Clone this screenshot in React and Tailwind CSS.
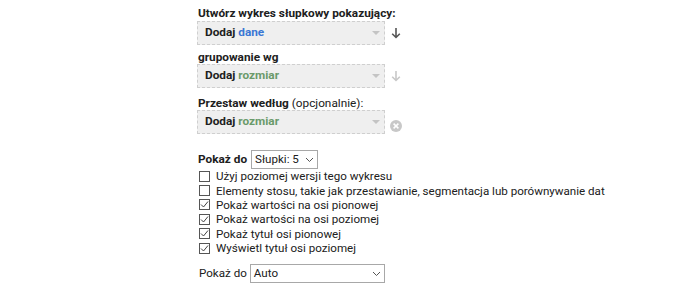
import React from "react";

const font = { fontFamily: "Roboto, 'Noto Sans', sans-serif" };

function Caret() {
  return (
    <svg width="8" height="5" viewBox="0 0 8 5" className="shrink-0">
      <path d="M0 0 L8 0 L4 4 Z" fill="#c4c4c4" />
    </svg>
  );
}

function DownArrow({ color }) {
  return (
    <svg width="10" height="12" viewBox="0 0 10 12">
      <path d="M5 1 V10.5 M1.2 6.8 L5 10.5 L8.8 6.8" stroke={color} strokeWidth="1.6" fill="none" />
    </svg>
  );
}

function ClearIcon() {
  return (
    <svg width="12" height="12" viewBox="0 0 12 12">
      <circle cx="6" cy="6" r="6" fill="#c8c8c8" />
      <path d="M3.6 3.6 L8.4 8.4 M8.4 3.6 L3.6 8.4" stroke="#fff" strokeWidth="1.5" />
    </svg>
  );
}

function DashedSelect({ word, wordColor, right }) {
  return (
    <div className="flex items-center">
      <div className="w-[188px] h-[24px] border border-dashed border-[#cfcfcf] bg-[#efefef] flex items-center justify-between pl-[7px] pr-[4px]">
        <span className="text-[11.8px] font-bold text-[#202020]">
          Dodaj <span style={{ color: wordColor }}>{word}</span>
        </span>
        <Caret />
      </div>
      <div className="w-[20px] flex justify-center ml-[1px]">{right}</div>
    </div>
  );
}

function Check({ checked, label }) {
  return (
    <div className="flex items-center h-[14.4px] shrink-0">
      <div className="w-[11px] h-[11px] border border-[#555] bg-white flex items-center justify-center mr-[6px] shrink-0">
        {checked && (
          <svg width="9" height="9" viewBox="0 0 9 9">
            <path d="M1 4.5 L3.5 7 L8 1.5" stroke="#444" strokeWidth="1" fill="none" />
          </svg>
        )}
      </div>
      <span className="text-[11.6px] text-[#202020] leading-[14px]">{label}</span>
    </div>
  );
}

export default function App() {
  return (
    <div className="w-[700px] h-[284px] bg-white relative overflow-hidden" style={font}>
      <div className="pl-[197px] pt-[4px] flex flex-col">
        <div className="text-[11.8px] font-bold text-[#202020] h-[17px] leading-[19px] pl-[1px]">Utwórz wykres słupkowy pokazujący:</div>
        <DashedSelect word="dane" wordColor="#3a77d4" right={<DownArrow color="#555" />} />
        <div className="text-[11.8px] font-bold text-[#202020] h-[19px] pt-[5px] leading-[14px] pl-[1px]">grupowanie wg</div>
        <DashedSelect word="rozmiar" wordColor="#6a9a6a" right={<DownArrow color="#c8c8c8" />} />
        <div className="text-[11.8px] font-bold text-[#202020] h-[22px] pt-[8px] leading-[14px] pl-[1px]">
          Przestaw według <span className="font-normal">(opcjonalnie):</span>
        </div>
        <div className="flex items-end">
          <DashedSelect word="rozmiar" wordColor="#6a9a6a" right={<div className="pt-[8px]"><ClearIcon /></div>} />
        </div>
        <div className="flex items-center mt-[16px] h-[19px] pl-[1px]">
          <span className="text-[11.8px] font-bold text-[#202020] mr-[4px]">Pokaż do</span>
          <div className="h-[19px] border border-[#a8a8a8] flex items-center px-[3px] gap-[6px] bg-white">
            <span className="text-[11.6px] text-[#202020]">Słupki: 5</span>
            <svg width="9" height="6" viewBox="0 0 9 6"><path d="M1 1 L4.5 4.5 L8 1" stroke="#555" fill="none" /></svg>
          </div>
        </div>
        <div className="flex flex-col pl-[2px]">
          <Check label="Użyj poziomej wersji tego wykresu" />
          <Check label="Elementy stosu, takie jak przestawianie, segmentacja lub porównywanie dat" />
          <Check checked label="Pokaż wartości na osi pionowej" />
          <Check checked label="Pokaż wartości na osi poziomej" />
          <Check checked label="Pokaż tytuł osi pionowej" />
          <Check checked label="Wyświetl tytuł osi poziomej" />
        </div>
        <div className="flex items-center mt-[9px] h-[19px] pl-[2px]">
          <span className="text-[11.6px] text-[#202020] mr-[3px]">Pokaż do</span>
          <div className="w-[135px] h-[19px] border border-[#a8a8a8] flex items-center justify-between px-[3px] bg-white">
            <span className="text-[11.6px] text-[#202020]">Auto</span>
            <svg width="9" height="6" viewBox="0 0 9 6"><path d="M1 1 L4.5 4.5 L8 1" stroke="#555" fill="none" /></svg>
          </div>
        </div>
      </div>
    </div>
  );
}
